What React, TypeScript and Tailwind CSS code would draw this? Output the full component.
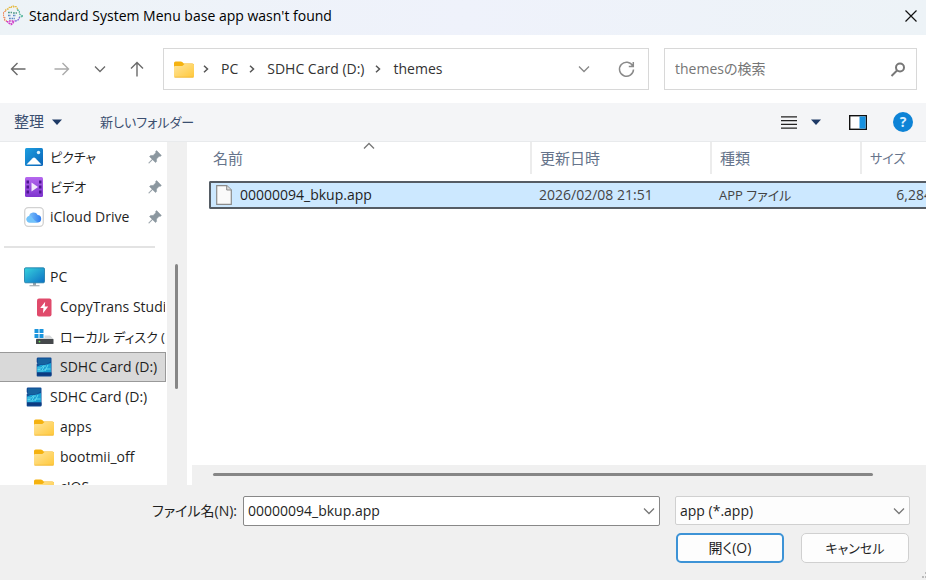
import type { ReactNode } from 'react'

function FolderIcon() {
  return (
    <svg width="20" height="17" viewBox="0 0 20 17" className="shrink-0">
      <defs>
        <linearGradient id="folder" x1="0" y1="0" x2="1" y2="1">
          <stop offset="0" stopColor="#ffe59c" />
          <stop offset="1" stopColor="#ffc83a" />
        </linearGradient>
      </defs>
      <path d="M0 2a1.6 1.6 0 0 1 1.6-1.6h5.2c.6 0 1 .2 1.4.6L9.8 2.5h8.6A1.6 1.6 0 0 1 20 4v3H0z" fill="#f5b20f" />
      <path d="M0 6a1 1 0 0 1 1-1h6.5c.6 0 1-.2 1.4-.6L10 3.4c.3-.4.7-.5 1.2-.5h7.4A1.4 1.4 0 0 1 20 4.3v10.9a1.4 1.4 0 0 1-1.4 1.4H1.4A1.4 1.4 0 0 1 0 15.2z" fill="url(#folder)" />
      <path d="M.5 16.2h19" stroke="#eeb02c" strokeWidth=".7" />
    </svg>
  )
}

function PictureIcon() {
  return (
    <svg width="18" height="18" viewBox="0 0 18 18" className="shrink-0">
      <defs>
        <linearGradient id="picture" x1="0" y1="0" x2="1" y2="1">
          <stop offset="0" stopColor="#1c9ee0" />
          <stop offset="1" stopColor="#0a64b8" />
        </linearGradient>
      </defs>
      <rect width="18" height="18" rx="1.5" fill="url(#picture)" />
      <path d="M1.5 16.5 7.6 10.2a2 2 0 0 1 2.8 0l6.1 6.3z" fill="#fff" />
      <circle cx="13.5" cy="4.5" r="1.7" fill="#d9f1ff" />
    </svg>
  )
}

function VideoIcon() {
  return (
    <svg width="18" height="20" viewBox="0 0 18 20" className="shrink-0">
      <defs>
        <linearGradient id="video" x1="0" y1="0" x2="0" y2="1">
          <stop offset="0" stopColor="#b567ee" />
          <stop offset="1" stopColor="#7f35cf" />
        </linearGradient>
      </defs>
      <rect width="18" height="20" rx="1.5" fill="url(#video)" />
      <path d="M1.5 3.5H4v3H1.5zM1.5 8.5H4v3H1.5zM1.5 13.5H4v3H1.5zM14 3.5h2.5v3H14zM14 8.5h2.5v3H14zM14 13.5h2.5v3H14z" fill="#4c1790" />
      <path d="M6.5 5.5v9L13 10z" fill="#f3e9fc" />
    </svg>
  )
}

function CloudIcon() {
  return (
    <svg width="20" height="20" viewBox="0 0 20 20" className="shrink-0">
      <defs>
        <linearGradient id="cloud" x1="0" y1="0" x2="1" y2="0">
          <stop offset="0" stopColor="#8fd0fb" />
          <stop offset="1" stopColor="#2f7df0" />
        </linearGradient>
      </defs>
      <rect x=".7" y=".7" width="18.6" height="18.6" rx="3.5" fill="#fff" stroke="#d2d2d2" strokeWidth="1.3" />
      <path d="M5.6 15.5a3.2 3.2 0 0 1-.6-6.3A4.7 4.7 0 0 1 13.7 8a3.8 3.8 0 0 1 .5 7.5z" fill="url(#cloud)" />
      <path d="M5.6 15.5a3.2 3.2 0 1 1 2.6-5c1.2 1.7 2.8 3.8 6 5z" fill="#72c3fa" />
    </svg>
  )
}

function MonitorIcon() {
  return (
    <svg width="21" height="20" viewBox="0 0 21 20" className="shrink-0">
      <defs>
        <linearGradient id="monitor" x1="0" y1="0" x2="1" y2="1">
          <stop offset="0" stopColor="#37d3dd" />
          <stop offset="1" stopColor="#0d6fc4" />
        </linearGradient>
      </defs>
      <path d="M9 15.5h3V19H9z" fill="#9aa5ad" />
      <path d="M5.5 18.7h10" stroke="#a5aeb5" strokeWidth="1.2" />
      <rect x=".5" y=".8" width="20" height="15" rx="1.2" fill="url(#monitor)" stroke="#1b78a5" strokeWidth=".8" />
    </svg>
  )
}

function BoltIcon() {
  return (
    <svg width="20" height="19" viewBox="0 0 20 19" className="shrink-0">
      <rect x="3" y=".5" width="14.5" height="18" rx="2" fill="#e04a6b" />
      <path d="m11.2 3.8-5 6.200h3.200l-.4 5.200 5.200-6.600h-3.500z" fill="#fff" />
    </svg>
  )
}

function DiskIcon() {
  return (
    <svg width="20" height="18" viewBox="0 0 20 18" className="shrink-0">
      <path d="M.5 1h4v4h-4zM5.5 1h4v4h-4zM.5 6h4v4h-4zM5.5 6h4v4h-4z" fill="#1b95dd" />
      <path d="M10.5 7.5H16l3.500 3.500H2l1-1h7.500z" fill="#d5d8da" />
      <rect x="2" y="11" width="17.5" height="5" rx=".6" fill="#45484b" />
      <circle cx="5.5" cy="13.6" r=".9" fill="#6be35d" />
    </svg>
  )
}

function CardIcon() {
  return (
    <svg width="20" height="20" viewBox="0 0 20 20" className="shrink-0">
      <path d="M4 .5h12.5a1 1 0 0 1 1 1v17a1 1 0 0 1-1 1h-13a.8.8 0 0 1-.8-.8V7l.8-.8-.8-1V1.8A1.300 1.300 0 0 1 4 .5z" fill="#114a93" />
      <path d="M4 1.5h12.5v3L12 7.500H4z" fill="#17639f" />
      <path d="M3 9.500 6.500 8h4l6.500-2v9.500H3z" fill="#1aa0d4" />
      <path d="M3.500 11h4l1.500-2h3M3.500 14h6l2-2h5M10 9.500l-2 4M14 8l-3 6M3.500 12.500h3" stroke="#64dcf0" strokeWidth=".9" fill="none" />
      <path d="M3 15.500h14.500v3H3z" fill="#0d3b80" />
    </svg>
  )
}

function PinIcon() {
  return (
    <svg width="14" height="14" viewBox="0 0 14 14" className="shrink-0">
      <path d="M8.600.6 13.400 5.400l-1.200 1-1-.1-2.700 2.700.1 2.500-1.100 1.100-2.900-2.900L.9 13.300l-.3-.3 3.600-3.800L1.500 6.500l1.100-1.100 2.500.1L7.800 2.800l-.2-1.200z" fill="#8b979f" stroke="#8b979f" strokeWidth=".5" />
    </svg>
  )
}

function Chevron({ className }: { className?: string }) {
  return (
    <svg width="12" height="8" viewBox="0 0 12 8" fill="none" stroke="currentColor" className={className}>
      <path d="m1 1.5 5 5 5-5" strokeWidth="1.3" />
    </svg>
  )
}

function CrumbArrow() {
  return (
    <svg width="6" height="8" viewBox="0 0 6 8" fill="none" stroke="#555" strokeWidth="1.5" className="shrink-0">
      <path d="m1 .7 3.5 3.300L1 7.300" />
    </svg>
  )
}

function LogoIcon() {
  return (
    <svg width="20" height="21" viewBox="0 0 20 21" fill="none" strokeWidth="1.3" strokeDasharray="1.8 .8" className="shrink-0">
      <path d="M3 6c-1-2 1-2 2-2 0-2 2-2 3-1 1-3 3-2 3-1 2-1 4 0 3 3" stroke="#e6b93c" />
      <path d="M14 5c2 0 3 1 2 3 1 2 3 3 4 3-1 1-3 1-4 1" stroke="#5cb8a0" />
      <path d="M3 6C0 7 0 8 1 9.500c-2 2 0 3 1 3.500-1 2 0 3 2 3" stroke="#ee8a5e" />
      <path d="M4 16c0 1 2 1 2 2l2 1.500L10 18c0-1 1-2 2-2M6 16h5" stroke="#d03cc8" strokeWidth="1.6" />
      <path d="M12 16c2 0 4-1 4.500-4" stroke="#8467d8" />
      <path d="M5 7.500h4M10 8h4" stroke="#4f9a86" />
      <path d="M5 10.500h3M10 10.500h3M6 13.500h6" stroke="#5b87c5" />
    </svg>
  )
}

type Place = { label: string; icon: ReactNode; level: number; pinned?: boolean; selected?: boolean }

const pinned: Place[] = [
  { label: 'ピクチャ', icon: <PictureIcon />, level: 0, pinned: true },
  { label: 'ビデオ', icon: <VideoIcon />, level: 0, pinned: true },
  { label: 'iCloud Drive', icon: <CloudIcon />, level: 0, pinned: true },
]

const places: Place[] = [
  { label: 'PC', icon: <MonitorIcon />, level: 0 },
  { label: 'CopyTrans Studio', icon: <BoltIcon />, level: 1 },
  { label: 'ローカル ディスク (C:)', icon: <DiskIcon />, level: 1 },
  { label: 'SDHC Card (D:)', icon: <CardIcon />, level: 1, selected: true },
  { label: 'SDHC Card (D:)', icon: <CardIcon />, level: 0 },
  { label: 'apps', icon: <FolderIcon />, level: 1 },
  { label: 'bootmii_off', icon: <FolderIcon />, level: 1 },
  { label: 'cIOS', icon: <FolderIcon />, level: 1 },
]

const isKana = (s: string) => /[ァ-ヶ]/.test(s)

function PlaceRow({ place }: { place: Place }) {
  return (
    <li>
      <button
        className={`flex h-[30px] w-full items-center gap-1.5 overflow-hidden border-y border-r text-left whitespace-nowrap ${
          place.level ? 'pl-[34px]' : 'pl-6'
        } ${place.selected ? 'border-[#999] bg-[#d9d9d9]' : 'border-transparent'}`}
      >
        <span className="flex w-5 shrink-0 justify-center">{place.icon}</span>
        <span className={`flex-1 ${isKana(place.label) ? 'text-[13px]' : ''}`}>{place.label}</span>
        {place.pinned && <span className="pr-[3px]"><PinIcon /></span>}
      </button>
    </li>
  )
}

export default function App() {
  return (
    <div className="flex h-screen flex-col overflow-hidden bg-[#f0f0f0] font-['Open_Sans','Noto_Sans_CJK_JP',sans-serif] text-sm text-[#1f1f1f] [font-feature-settings:'palt']">
      <header className="flex h-[35px] shrink-0 items-center bg-linear-to-r from-[#edf3f7] via-[#eff2fb] to-[#edf3f7] pr-2 pb-1 pl-[3px] text-black">
        <LogoIcon />
        <h1 className="ml-1.5 flex-1">Standard System Menu base app wasn't found</h1>
        <button aria-label="閉じる" className="p-px">
          <svg width="12" height="12" viewBox="0 0 12 12" stroke="#111" strokeWidth="1.2">
            <path d="m.5.5 11 11M11.500.5l-11 11" />
          </svg>
        </button>
      </header>

      <nav className="flex h-[68px] shrink-0 items-center bg-white pr-[9px] pl-[10px] text-[#333]">
        <div className="flex w-[153px] items-center text-[#6a6a6a]">
          <button aria-label="戻る">
            <svg width="16" height="14" viewBox="0 0 16 14" fill="none" stroke="currentColor" strokeWidth="1.4">
              <path d="M15.500 7H1.500M7.500 1l-6 6 6 6" />
            </svg>
          </button>
          <button aria-label="進む" className="ml-7 text-[#aaa]">
            <svg width="16" height="14" viewBox="0 0 16 14" fill="none" stroke="currentColor" strokeWidth="1.4">
              <path d="M.5 7h14M8.500 1l6 6-6 6" />
            </svg>
          </button>
          <button aria-label="履歴" className="ml-6"><Chevron /></button>
          <button aria-label="上へ" className="ml-6">
            <svg width="14" height="16" viewBox="0 0 14 16" fill="none" stroke="currentColor" strokeWidth="1.4">
              <path d="M7 15.500V1.500M1 7.500l6-6 6 6" />
            </svg>
          </button>
        </div>
        <div className="flex h-[42px] flex-1 items-center border border-[#d8d8d8] pr-[13px] pl-[10px]">
          <FolderIcon />
          <ol className="ml-[9px] flex flex-1 items-center gap-[11px]">
            <li className="flex items-center gap-3"><CrumbArrow /><a href="#pc">PC</a></li>
            <li className="flex items-center gap-3"><CrumbArrow /><a href="#sdhc">SDHC Card (D:)</a></li>
            <li className="flex items-center gap-3"><CrumbArrow /><a href="#themes">themes</a></li>
          </ol>
          <button aria-label="以前の場所" className="text-[#888]"><Chevron /></button>
          <button aria-label="更新" className="ml-7">
            <svg width="17" height="17" viewBox="0 0 17 17" fill="none" stroke="#8a8a8a" strokeWidth="1.5">
              <path d="M14.700 5A7 7 0 1 0 15.500 8.500M15.300 1v4.500h-4.500" />
            </svg>
          </button>
        </div>
        <label className="ml-[15px] flex h-[42px] w-[253px] items-center border border-[#d8d8d8] px-[10px]">
          <input aria-label="検索" placeholder="themesの検索" className="min-w-0 flex-1 outline-none placeholder:text-[#767676]" />
          <svg width="16" height="15" viewBox="0 0 16 15" fill="none" stroke="#777">
            <circle cx="10" cy="5.5" r="4" strokeWidth="2" />
            <path d="M7 8.500 1.500 14" strokeWidth="2" />
          </svg>
        </label>
      </nav>

      <div className="flex h-[39px] shrink-0 items-center border-b border-[#e8eaec] bg-[#f4f5f7] pr-[13px] pl-[14px] text-[#3b4f70]">
        <button className="flex items-center gap-2 text-[15px]">
          整理
          <svg width="10" height="6" viewBox="0 0 10 6"><path d="M0 .5h10L5 6z" fill="#1e3a66" /></svg>
        </button>
        <button className="ml-[38px] text-[13px]">新しいフォルダー</button>
        <button aria-label="表示方法" className="ml-auto flex items-center gap-3.5">
          <svg width="16" height="13" viewBox="0 0 16 13" stroke="#222" strokeWidth="1.2">
            <path d="M0 .8h16M0 4.600h16M0 8.400h16M0 12.200h16" />
          </svg>
          <svg width="10" height="6" viewBox="0 0 10 6"><path d="M0 .5h10L5 6z" fill="#1e3a66" /></svg>
        </button>
        <button aria-label="プレビュー ウィンドウ" className="ml-7">
          <svg width="18" height="15" viewBox="0 0 18 15">
            <rect x=".7" y=".7" width="16.6" height="13.6" fill="#fff" stroke="#111" strokeWidth="1.4" />
            <path d="M10.500 1.400h6.100v12.200h-6.100z" fill="#1691e0" />
          </svg>
        </button>
        <button aria-label="ヘルプ" className="ml-[26px] flex size-5 items-center justify-center rounded-full bg-[#0d83d6] text-sm font-bold text-[#d9efff]">
          ?
        </button>
      </div>

      <main className="flex min-h-0 flex-1 bg-white">
        <aside className="w-[167px] shrink-0 overflow-hidden">
          <ul className="w-[166px]">
            {pinned.map(p => <PlaceRow key={p.label} place={p} />)}
          </ul>
          <div className="flex h-[30px] items-center pr-3 pl-1">
            <hr className="w-full border-t-2 border-[#e3e3e3]" />
          </div>
          <ul className="w-[166px]">
            {places.map((p, i) => <PlaceRow key={i} place={p} />)}
          </ul>
        </aside>
        <div className="w-5 shrink-0 bg-[#f0f0f0] pt-[122px] pl-2">
          <div className="h-[125px] w-[3px] rounded-full bg-[#868686]" />
        </div>

        <section className="ml-[5px] flex min-w-0 flex-1 flex-col">
          <div className="relative min-h-0 flex-1 overflow-hidden pl-[17px]">
            <Chevron className="absolute top-0 left-[171px] rotate-180 text-[#777]" />
            <table className="w-[750px] table-fixed border-separate border-spacing-0 whitespace-nowrap">
              <colgroup>
                <col className="w-[321px]" />
                <col className="w-[180px]" />
                <col className="w-[150px]" />
                <col />
              </colgroup>
              <thead>
                <tr className="text-left text-[15px] text-[#66748b]">
                  <th className="p-0 pb-[7px] font-normal"><div className="h-8 pl-1 leading-8">名前</div></th>
                  <th className="p-0 pb-[7px] font-normal"><div className="h-8 border-l-2 border-[#ececec] pl-2 leading-8">更新日時</div></th>
                  <th className="p-0 pb-[7px] font-normal"><div className="h-8 border-l-2 border-[#ececec] pl-2 leading-8">種類</div></th>
                  <th className="p-0 pb-[7px] font-normal"><div className="h-8 border-l-2 border-[#ececec] pl-2 text-[13px] leading-8">サイズ</div></th>
                </tr>
              </thead>
              <tbody>
                <tr className="h-7 bg-[#cce8ff] text-[#444]">
                  <td className="rounded-l-xs border-y-2 border-l-2 border-[#555c64] p-0 text-[#1f1f1f]">
                    <span className="flex items-center gap-2 pl-[5px]">
                      <svg width="16" height="20" viewBox="0 0 16 20">
                        <path d="M.7.7h10L15.300 5v14.300H.7z" fill="#fafafa" stroke="#8b8b8b" strokeWidth="1.2" />
                        <path d="M10.700.7V5h4.600" fill="#ddd" stroke="#8b8b8b" />
                      </svg>
                      00000094_bkup.app
                    </span>
                  </td>
                  <td className="border-y-2 border-[#555c64] p-0 pl-[9px]">2026/02/08 21:51</td>
                  <td className="border-y-2 border-[#555c64] p-0 pl-[9px] text-[13px]">APP ファイル</td>
                  <td className="border-y-2 border-[#555c64] p-0 pr-[27px] text-right">6,284</td>
                </tr>
              </tbody>
            </table>
          </div>
          <div className="h-5 shrink-0 bg-[#f0f0f0] pt-2 pr-[53px] pl-[21px]">
            <div className="h-[3px] w-full rounded-full bg-[#868686]" />
          </div>
        </section>
      </main>

      <footer className="h-[95px] shrink-0 pt-[11px] pr-4">
        <div className="flex items-start">
          <label htmlFor="filename" className="w-[243px] pr-1.5 text-right leading-[30px]">ファイル名(N):</label>
          <div className="flex h-[30px] min-w-0 flex-1 items-center rounded-xs border border-[#888] bg-white px-1">
            <input id="filename" defaultValue="00000094_bkup.app" className="min-w-0 flex-1 outline-none" />
            <button aria-label="履歴を表示" className="text-[#777]"><Chevron /></button>
          </div>
          <div className="relative ml-[15px] w-[235px]">
            <select aria-label="ファイルの種類" className="h-[29px] w-full appearance-none rounded-xs border border-[#d0d0d0] bg-[#fdfdfd] pl-1 outline-none">
              <option>app (*.app)</option>
            </select>
            <Chevron className="pointer-events-none absolute top-[11px] right-[5px] text-[#777]" />
          </div>
        </div>
        <div className="mt-[7px] flex justify-end gap-[17px] pr-px">
          <button className="h-[30px] w-[108px] rounded-[5px] border-2 border-[#3d93d6] bg-[#fdfdfd]">開く(O)</button>
          <button className="h-[30px] w-[108px] rounded-[5px] border border-[#d0d0d0] bg-[#fdfdfd] text-[13px]">キャンセル</button>
        </div>
      </footer>
      <svg width="4" height="8" viewBox="0 0 4 8" className="absolute right-0 bottom-0" fill="#bbb">
        <path d="M3 0h1v2H3zM0 4h2v2H0zM3 4h1v2H3z" />
      </svg>
    </div>
  )
}
